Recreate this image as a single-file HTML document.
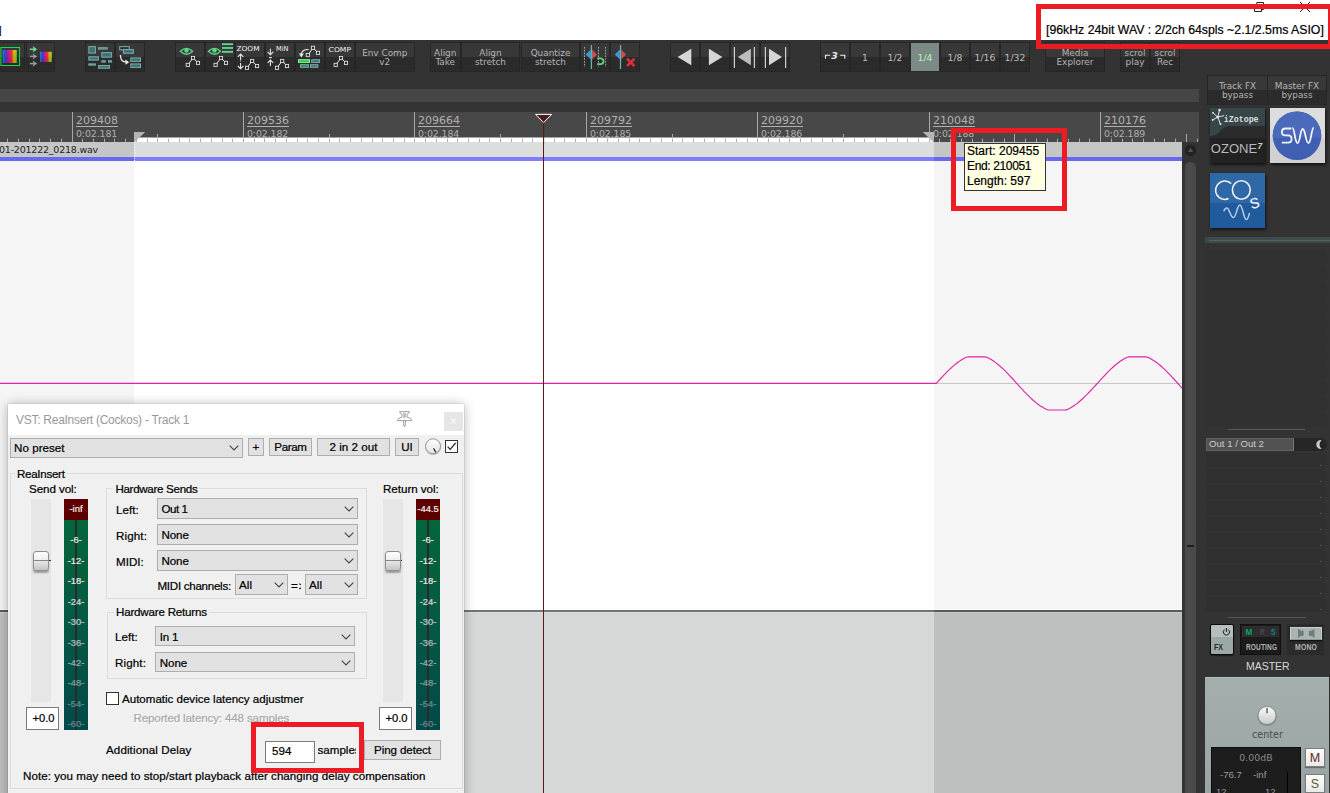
<!DOCTYPE html><html><head><meta charset="utf-8"><title>REAPER ReaInsert</title><style>
*{box-sizing:border-box}
html,body{margin:0;padding:0}
body{width:1330px;height:793px;overflow:hidden;background:#fff;position:relative;font-family:"Liberation Sans",sans-serif;font-size:12px;color:#000}
.a{position:absolute}
.tb{position:absolute;top:42px;height:30px;background:linear-gradient(#383838 0,#383838 50%,#2b2b2b 50%,#2b2b2b 100%);border:1px solid #262626;color:#b4b4b4;font-family:'DejaVu Sans',sans-serif;font-size:8.9px;line-height:9px;text-align:center;overflow:hidden}
.tb span{position:absolute;left:-4px;right:-4px;top:50%;transform:translateY(-50%);margin-top:1.3px}
.tb.g span{margin-top:-.2px}
.tb svg{position:absolute;left:-1px;top:-1px}
.rl{position:absolute;top:115px;font-family:"DejaVu Sans",sans-serif;font-size:11px;color:#b0b0b0;line-height:12px;white-space:nowrap}
.rl u{display:block;text-decoration:none;border-bottom:1px solid #b0b0b0;height:12px;line-height:11px}
.rl i{display:block;font-style:normal;font-size:9.4px;margin-top:1px;letter-spacing:-.1px}
</style></head><body>
<div class="a" style="left:0;top:40px;width:1330px;height:753px;background:#333"></div>
<div class="a" style="left:0;top:89px;width:1199px;height:13px;background:#464646"></div>
<div class="a" style="left:0;top:102px;width:1199px;height:10px;background:#343434"></div>
<div class="a" style="left:0;top:112px;width:1199px;height:30px;background:#484848"></div>
<svg class="a" style="left:0;top:112px" width="1199" height="30" viewBox="0 0 1199 30"><rect x="134" y="25.5" width="800" height="4.5" fill="#fff"/><rect x="7" y="26.6" width="1" height="3.4" fill="#a8a8a8"/><rect x="18" y="26.6" width="1" height="3.4" fill="#a8a8a8"/><rect x="29" y="26.6" width="1" height="3.4" fill="#a8a8a8"/><rect x="39" y="26.6" width="1" height="3.4" fill="#a8a8a8"/><rect x="50" y="26.6" width="1" height="3.4" fill="#a8a8a8"/><rect x="61" y="26.6" width="1" height="3.4" fill="#a8a8a8"/><rect x="72" y="0" width="1" height="30" fill="#a8a8a8"/><rect x="82" y="26.6" width="1" height="3.4" fill="#a8a8a8"/><rect x="93" y="26.6" width="1" height="3.4" fill="#a8a8a8"/><rect x="104" y="26.6" width="1" height="3.4" fill="#a8a8a8"/><rect x="114" y="26.6" width="1" height="3.4" fill="#a8a8a8"/><rect x="125" y="26.6" width="1" height="3.4" fill="#a8a8a8"/><rect x="136" y="26.6" width="1" height="3.4" fill="#a8a8a8"/><rect x="147" y="26.6" width="1" height="3.4" fill="#a8a8a8"/><rect x="157" y="22" width="1" height="8" fill="#a8a8a8"/><rect x="168" y="26.6" width="1" height="3.4" fill="#a8a8a8"/><rect x="179" y="26.6" width="1" height="3.4" fill="#a8a8a8"/><rect x="189" y="26.6" width="1" height="3.4" fill="#a8a8a8"/><rect x="200" y="26.6" width="1" height="3.4" fill="#a8a8a8"/><rect x="211" y="26.6" width="1" height="3.4" fill="#a8a8a8"/><rect x="222" y="26.6" width="1" height="3.4" fill="#a8a8a8"/><rect x="232" y="26.6" width="1" height="3.4" fill="#a8a8a8"/><rect x="243" y="0" width="1" height="30" fill="#a8a8a8"/><rect x="254" y="26.6" width="1" height="3.4" fill="#a8a8a8"/><rect x="264" y="26.6" width="1" height="3.4" fill="#a8a8a8"/><rect x="275" y="26.6" width="1" height="3.4" fill="#a8a8a8"/><rect x="286" y="26.6" width="1" height="3.4" fill="#a8a8a8"/><rect x="297" y="26.6" width="1" height="3.4" fill="#a8a8a8"/><rect x="307" y="26.6" width="1" height="3.4" fill="#a8a8a8"/><rect x="318" y="26.6" width="1" height="3.4" fill="#a8a8a8"/><rect x="329" y="22" width="1" height="8" fill="#a8a8a8"/><rect x="339" y="26.6" width="1" height="3.4" fill="#a8a8a8"/><rect x="350" y="26.6" width="1" height="3.4" fill="#a8a8a8"/><rect x="361" y="26.6" width="1" height="3.4" fill="#a8a8a8"/><rect x="372" y="26.6" width="1" height="3.4" fill="#a8a8a8"/><rect x="382" y="26.6" width="1" height="3.4" fill="#a8a8a8"/><rect x="393" y="26.6" width="1" height="3.4" fill="#a8a8a8"/><rect x="404" y="26.6" width="1" height="3.4" fill="#a8a8a8"/><rect x="414" y="0" width="1" height="30" fill="#a8a8a8"/><rect x="425" y="26.6" width="1" height="3.4" fill="#a8a8a8"/><rect x="436" y="26.6" width="1" height="3.4" fill="#a8a8a8"/><rect x="447" y="26.6" width="1" height="3.4" fill="#a8a8a8"/><rect x="457" y="26.6" width="1" height="3.4" fill="#a8a8a8"/><rect x="468" y="26.6" width="1" height="3.4" fill="#a8a8a8"/><rect x="479" y="26.6" width="1" height="3.4" fill="#a8a8a8"/><rect x="489" y="26.6" width="1" height="3.4" fill="#a8a8a8"/><rect x="500" y="22" width="1" height="8" fill="#a8a8a8"/><rect x="511" y="26.6" width="1" height="3.4" fill="#a8a8a8"/><rect x="522" y="26.6" width="1" height="3.4" fill="#a8a8a8"/><rect x="532" y="26.6" width="1" height="3.4" fill="#a8a8a8"/><rect x="543" y="26.6" width="1" height="3.4" fill="#a8a8a8"/><rect x="554" y="26.6" width="1" height="3.4" fill="#a8a8a8"/><rect x="564" y="26.6" width="1" height="3.4" fill="#a8a8a8"/><rect x="575" y="26.6" width="1" height="3.4" fill="#a8a8a8"/><rect x="586" y="0" width="1" height="30" fill="#a8a8a8"/><rect x="597" y="26.6" width="1" height="3.4" fill="#a8a8a8"/><rect x="607" y="26.6" width="1" height="3.4" fill="#a8a8a8"/><rect x="618" y="26.6" width="1" height="3.4" fill="#a8a8a8"/><rect x="629" y="26.6" width="1" height="3.4" fill="#a8a8a8"/><rect x="639" y="26.6" width="1" height="3.4" fill="#a8a8a8"/><rect x="650" y="26.6" width="1" height="3.4" fill="#a8a8a8"/><rect x="661" y="26.6" width="1" height="3.4" fill="#a8a8a8"/><rect x="672" y="22" width="1" height="8" fill="#a8a8a8"/><rect x="682" y="26.6" width="1" height="3.4" fill="#a8a8a8"/><rect x="693" y="26.6" width="1" height="3.4" fill="#a8a8a8"/><rect x="704" y="26.6" width="1" height="3.4" fill="#a8a8a8"/><rect x="714" y="26.6" width="1" height="3.4" fill="#a8a8a8"/><rect x="725" y="26.6" width="1" height="3.4" fill="#a8a8a8"/><rect x="736" y="26.6" width="1" height="3.4" fill="#a8a8a8"/><rect x="747" y="26.6" width="1" height="3.4" fill="#a8a8a8"/><rect x="757" y="0" width="1" height="30" fill="#a8a8a8"/><rect x="768" y="26.6" width="1" height="3.4" fill="#a8a8a8"/><rect x="779" y="26.6" width="1" height="3.4" fill="#a8a8a8"/><rect x="789" y="26.6" width="1" height="3.4" fill="#a8a8a8"/><rect x="800" y="26.6" width="1" height="3.4" fill="#a8a8a8"/><rect x="811" y="26.6" width="1" height="3.4" fill="#a8a8a8"/><rect x="822" y="26.6" width="1" height="3.4" fill="#a8a8a8"/><rect x="832" y="26.6" width="1" height="3.4" fill="#a8a8a8"/><rect x="843" y="22" width="1" height="8" fill="#a8a8a8"/><rect x="854" y="26.6" width="1" height="3.4" fill="#a8a8a8"/><rect x="864" y="26.6" width="1" height="3.4" fill="#a8a8a8"/><rect x="875" y="26.6" width="1" height="3.4" fill="#a8a8a8"/><rect x="886" y="26.6" width="1" height="3.4" fill="#a8a8a8"/><rect x="897" y="26.6" width="1" height="3.4" fill="#a8a8a8"/><rect x="907" y="26.6" width="1" height="3.4" fill="#a8a8a8"/><rect x="918" y="26.6" width="1" height="3.4" fill="#a8a8a8"/><rect x="929" y="0" width="1" height="30" fill="#a8a8a8"/><rect x="939" y="26.6" width="1" height="3.4" fill="#a8a8a8"/><rect x="950" y="26.6" width="1" height="3.4" fill="#a8a8a8"/><rect x="961" y="26.6" width="1" height="3.4" fill="#a8a8a8"/><rect x="972" y="26.6" width="1" height="3.4" fill="#a8a8a8"/><rect x="982" y="26.6" width="1" height="3.4" fill="#a8a8a8"/><rect x="993" y="26.6" width="1" height="3.4" fill="#a8a8a8"/><rect x="1004" y="26.6" width="1" height="3.4" fill="#a8a8a8"/><rect x="1014" y="22" width="1" height="8" fill="#a8a8a8"/><rect x="1025" y="26.6" width="1" height="3.4" fill="#a8a8a8"/><rect x="1036" y="26.6" width="1" height="3.4" fill="#a8a8a8"/><rect x="1047" y="26.6" width="1" height="3.4" fill="#a8a8a8"/><rect x="1057" y="26.6" width="1" height="3.4" fill="#a8a8a8"/><rect x="1068" y="26.6" width="1" height="3.4" fill="#a8a8a8"/><rect x="1079" y="26.6" width="1" height="3.4" fill="#a8a8a8"/><rect x="1089" y="26.6" width="1" height="3.4" fill="#a8a8a8"/><rect x="1100" y="0" width="1" height="30" fill="#a8a8a8"/><rect x="1111" y="26.6" width="1" height="3.4" fill="#a8a8a8"/><rect x="1122" y="26.6" width="1" height="3.4" fill="#a8a8a8"/><rect x="1132" y="26.6" width="1" height="3.4" fill="#a8a8a8"/><rect x="1143" y="26.6" width="1" height="3.4" fill="#a8a8a8"/><rect x="1154" y="26.6" width="1" height="3.4" fill="#a8a8a8"/><rect x="1164" y="26.6" width="1" height="3.4" fill="#a8a8a8"/><rect x="1175" y="26.6" width="1" height="3.4" fill="#a8a8a8"/><rect x="1186" y="22" width="1" height="8" fill="#a8a8a8"/><rect x="1197" y="26.6" width="1" height="3.4" fill="#a8a8a8"/><polygon points="134,20 145,20 134,30" fill="#b4b4b4"/><polygon points="934,20 923,20 934,30" fill="#b4b4b4"/></svg>
<div class="rl" style="left:76.0px"><u>209408</u><i>0:02.181</i></div>
<div class="rl" style="left:247.0px"><u>209536</u><i>0:02.182</i></div>
<div class="rl" style="left:418.0px"><u>209664</u><i>0:02.184</i></div>
<div class="rl" style="left:590.0px"><u>209792</u><i>0:02.185</i></div>
<div class="rl" style="left:761.0px"><u>209920</u><i>0:02.186</i></div>
<div class="rl" style="left:933.0px"><u>210048</u><i>0:02.188</i></div>
<div class="rl" style="left:1104.0px"><u>210176</u><i>0:02.189</i></div>
<div class="a" style="left:134px;top:137.5px;width:800px;height:4.5px;background:#fff"></div>
<svg class="a" style="left:0;top:112px" width="1199" height="30" viewBox="0 0 1199 30"><rect x="136" y="26.6" width="1" height="3.4" fill="#aeaeae"/><rect x="147" y="26.6" width="1" height="3.4" fill="#aeaeae"/><rect x="157" y="26.6" width="1" height="3.4" fill="#aeaeae"/><rect x="168" y="26.6" width="1" height="3.4" fill="#aeaeae"/><rect x="179" y="26.6" width="1" height="3.4" fill="#aeaeae"/><rect x="189" y="26.6" width="1" height="3.4" fill="#aeaeae"/><rect x="200" y="26.6" width="1" height="3.4" fill="#aeaeae"/><rect x="211" y="26.6" width="1" height="3.4" fill="#aeaeae"/><rect x="222" y="26.6" width="1" height="3.4" fill="#aeaeae"/><rect x="232" y="26.6" width="1" height="3.4" fill="#aeaeae"/><rect x="243" y="26.6" width="1" height="3.4" fill="#aeaeae"/><rect x="254" y="26.6" width="1" height="3.4" fill="#aeaeae"/><rect x="264" y="26.6" width="1" height="3.4" fill="#aeaeae"/><rect x="275" y="26.6" width="1" height="3.4" fill="#aeaeae"/><rect x="286" y="26.6" width="1" height="3.4" fill="#aeaeae"/><rect x="297" y="26.6" width="1" height="3.4" fill="#aeaeae"/><rect x="307" y="26.6" width="1" height="3.4" fill="#aeaeae"/><rect x="318" y="26.6" width="1" height="3.4" fill="#aeaeae"/><rect x="329" y="26.6" width="1" height="3.4" fill="#aeaeae"/><rect x="339" y="26.6" width="1" height="3.4" fill="#aeaeae"/><rect x="350" y="26.6" width="1" height="3.4" fill="#aeaeae"/><rect x="361" y="26.6" width="1" height="3.4" fill="#aeaeae"/><rect x="372" y="26.6" width="1" height="3.4" fill="#aeaeae"/><rect x="382" y="26.6" width="1" height="3.4" fill="#aeaeae"/><rect x="393" y="26.6" width="1" height="3.4" fill="#aeaeae"/><rect x="404" y="26.6" width="1" height="3.4" fill="#aeaeae"/><rect x="414" y="26.6" width="1" height="3.4" fill="#aeaeae"/><rect x="425" y="26.6" width="1" height="3.4" fill="#aeaeae"/><rect x="436" y="26.6" width="1" height="3.4" fill="#aeaeae"/><rect x="447" y="26.6" width="1" height="3.4" fill="#aeaeae"/><rect x="457" y="26.6" width="1" height="3.4" fill="#aeaeae"/><rect x="468" y="26.6" width="1" height="3.4" fill="#aeaeae"/><rect x="479" y="26.6" width="1" height="3.4" fill="#aeaeae"/><rect x="489" y="26.6" width="1" height="3.4" fill="#aeaeae"/><rect x="500" y="26.6" width="1" height="3.4" fill="#aeaeae"/><rect x="511" y="26.6" width="1" height="3.4" fill="#aeaeae"/><rect x="522" y="26.6" width="1" height="3.4" fill="#aeaeae"/><rect x="532" y="26.6" width="1" height="3.4" fill="#aeaeae"/><rect x="543" y="26.6" width="1" height="3.4" fill="#aeaeae"/><rect x="554" y="26.6" width="1" height="3.4" fill="#aeaeae"/><rect x="564" y="26.6" width="1" height="3.4" fill="#aeaeae"/><rect x="575" y="26.6" width="1" height="3.4" fill="#aeaeae"/><rect x="586" y="26.6" width="1" height="3.4" fill="#aeaeae"/><rect x="597" y="26.6" width="1" height="3.4" fill="#aeaeae"/><rect x="607" y="26.6" width="1" height="3.4" fill="#aeaeae"/><rect x="618" y="26.6" width="1" height="3.4" fill="#aeaeae"/><rect x="629" y="26.6" width="1" height="3.4" fill="#aeaeae"/><rect x="639" y="26.6" width="1" height="3.4" fill="#aeaeae"/><rect x="650" y="26.6" width="1" height="3.4" fill="#aeaeae"/><rect x="661" y="26.6" width="1" height="3.4" fill="#aeaeae"/><rect x="672" y="26.6" width="1" height="3.4" fill="#aeaeae"/><rect x="682" y="26.6" width="1" height="3.4" fill="#aeaeae"/><rect x="693" y="26.6" width="1" height="3.4" fill="#aeaeae"/><rect x="704" y="26.6" width="1" height="3.4" fill="#aeaeae"/><rect x="714" y="26.6" width="1" height="3.4" fill="#aeaeae"/><rect x="725" y="26.6" width="1" height="3.4" fill="#aeaeae"/><rect x="736" y="26.6" width="1" height="3.4" fill="#aeaeae"/><rect x="747" y="26.6" width="1" height="3.4" fill="#aeaeae"/><rect x="757" y="26.6" width="1" height="3.4" fill="#aeaeae"/><rect x="768" y="26.6" width="1" height="3.4" fill="#aeaeae"/><rect x="779" y="26.6" width="1" height="3.4" fill="#aeaeae"/><rect x="789" y="26.6" width="1" height="3.4" fill="#aeaeae"/><rect x="800" y="26.6" width="1" height="3.4" fill="#aeaeae"/><rect x="811" y="26.6" width="1" height="3.4" fill="#aeaeae"/><rect x="822" y="26.6" width="1" height="3.4" fill="#aeaeae"/><rect x="832" y="26.6" width="1" height="3.4" fill="#aeaeae"/><rect x="843" y="26.6" width="1" height="3.4" fill="#aeaeae"/><rect x="854" y="26.6" width="1" height="3.4" fill="#aeaeae"/><rect x="864" y="26.6" width="1" height="3.4" fill="#aeaeae"/><rect x="875" y="26.6" width="1" height="3.4" fill="#aeaeae"/><rect x="886" y="26.6" width="1" height="3.4" fill="#aeaeae"/><rect x="897" y="26.6" width="1" height="3.4" fill="#aeaeae"/><rect x="907" y="26.6" width="1" height="3.4" fill="#aeaeae"/><rect x="918" y="26.6" width="1" height="3.4" fill="#aeaeae"/><rect x="929" y="26.6" width="1" height="3.4" fill="#aeaeae"/><polygon points="134,20 145,20 134,31" fill="#b4b4b4"/><polygon points="934,20 923,20 934,31" fill="#b4b4b4"/></svg>
<div class="a" style="left:0;top:142px;width:1182px;height:651px;background:#f5f5f5;overflow:hidden">
<div class="a" style="left:0;top:0;width:1182px;height:15px;background:#c5c7c6"></div>
<div class="a" style="left:0;top:15px;width:1182px;height:4px;background:#6868f2"></div>
<div class="a" style="left:0;top:468px;width:1182px;height:183px;background:#bec0bf"></div>
<div class="a" style="left:134px;top:0;width:800px;height:15px;background:#dcdedd"></div>
<div class="a" style="left:134px;top:15px;width:800px;height:4px;background:#7e7eff"></div>
<div class="a" style="left:134px;top:19px;width:800px;height:449px;background:#fff"></div>
<div class="a" style="left:134px;top:468px;width:800px;height:183px;background:#d6d8d7"></div>
<div class="a" style="left:0;top:467px;width:1182px;height:1px;background:#fff"></div>
<div class="a" style="left:0;top:468px;width:1182px;height:2px;background:#595b5a"></div>
<div class="a" style="left:134px;top:468px;width:800px;height:2px;background:#737574"></div>
<div class="a" style="left:0;top:470px;width:1182px;height:1px;background:#c8cac9"></div>
<div class="a" style="left:134px;top:470px;width:800px;height:1px;background:#dddfde"></div>
<div class="a" style="left:133.5px;top:0;width:0;height:19px;border-left:1px dotted #fff"></div>
<div class="a" style="left:-1px;top:1px;font-family:'DejaVu Sans',sans-serif;font-size:9.5px;letter-spacing:-.22px;line-height:13px;color:#222;white-space:nowrap">01-201222_0218.wav</div>
<svg class="a" style="left:0;top:0" width="1182" height="651" viewBox="0 0 1182 651" fill="none"><path d="M936 241.4 H1182" stroke="#c2c4c3" stroke-width="1"/><path d="M0 241.4 L936.3 241.4 L936.3 241.4 L938.3 239.2 L940.3 237.0 L942.3 234.8 L944.3 232.7 L946.3 230.6 L948.3 228.6 L950.3 226.7 L952.3 224.9 L954.3 223.1 L956.3 221.5 L958.3 220.0 L960.3 218.6 L962.3 217.4 L964.3 216.3 L966.3 215.3 L968.3 214.8 L970.3 214.8 L972.3 214.8 L974.3 214.8 L976.3 214.8 L978.3 214.8 L980.3 214.8 L982.3 214.8 L984.3 214.8 L986.3 215.1 L988.3 216.0 L990.3 217.1 L992.3 218.3 L994.3 219.6 L996.3 221.1 L998.3 222.7 L1000.3 224.4 L1002.3 226.2 L1004.3 228.1 L1006.3 230.1 L1008.3 232.2 L1010.3 234.3 L1012.3 236.5 L1014.3 238.6 L1016.3 240.8 L1018.3 243.1 L1020.3 245.3 L1022.3 247.4 L1024.3 249.6 L1026.3 251.7 L1028.3 253.7 L1030.3 255.6 L1032.3 257.5 L1034.3 259.3 L1036.3 260.9 L1038.3 262.5 L1040.3 263.9 L1042.3 265.1 L1044.3 266.3 L1046.3 267.2 L1048.3 268.0 L1050.3 268.0 L1052.3 268.0 L1054.3 268.0 L1056.3 268.0 L1058.3 268.0 L1060.3 268.0 L1062.3 268.0 L1064.3 268.0 L1066.3 267.9 L1068.3 267.0 L1070.3 266.0 L1072.3 264.8 L1074.3 263.5 L1076.3 262.1 L1078.3 260.5 L1080.3 258.8 L1082.3 257.0 L1084.3 255.1 L1086.3 253.2 L1088.3 251.1 L1090.3 249.0 L1092.3 246.9 L1094.3 244.7 L1096.3 242.5 L1098.3 240.3 L1100.3 238.1 L1102.3 235.9 L1104.3 233.8 L1106.3 231.7 L1108.3 229.6 L1110.3 227.7 L1112.3 225.8 L1114.3 224.0 L1116.3 222.3 L1118.3 220.7 L1120.3 219.3 L1122.3 218.0 L1124.3 216.8 L1126.3 215.8 L1128.3 214.9 L1130.3 214.8 L1132.3 214.8 L1134.3 214.8 L1136.3 214.8 L1138.3 214.8 L1140.3 214.8 L1142.3 214.8 L1144.3 214.8 L1146.3 214.8 L1148.3 215.6 L1150.3 216.5 L1152.3 217.7 L1154.3 218.9 L1156.3 220.3 L1158.3 221.9 L1160.3 223.5 L1162.3 225.3 L1164.3 227.2 L1166.3 229.1 L1168.3 231.1 L1170.3 233.2 L1172.3 235.4 L1174.3 237.5 L1176.3 239.7 L1178.3 242.0 L1180.3 244.2 L1182.3 246.3" stroke="#e022a6" stroke-width="1.15" stroke-linejoin="round"/></svg>
<div class="a" style="left:543px;top:-5px;width:1.1px;height:660px;background:#5a1a1a"></div>
</div>
<svg class="a" style="left:534px;top:112px" width="20" height="32" viewBox="0 0 20 32"><polygon points="1.6,2.4 17.6,2.4 9.6,10.6" fill="#4a1c1c" stroke="#fff" stroke-width="1"/><rect x="9" y="10.8" width="1.1" height="22" fill="#5a1a1a"/></svg>
<div class="a" style="left:1182px;top:142px;width:17px;height:651px;background:#333"></div>
<div class="a" style="left:1185px;top:162px;width:11px;height:640px;background:#4a4a4a;border-radius:5px"></div>
<div class="a" style="left:1187px;top:545px;width:7px;height:2px;background:#1e1e1e"></div>
<svg class="a" style="left:1184px;top:144px" width="13" height="13" viewBox="0 0 13 13"><circle cx="6.5" cy="6.5" r="5.7" fill="#222"/><polygon points="6.5,3.8 9.3,8 3.7,8" fill="#505050"/></svg>
<svg class="a" width="0" height="0"><defs><linearGradient id="rb" x1="0" x2="1" y1="0" y2="0"><stop offset="0" stop-color="#1a9ee8"/><stop offset=".12" stop-color="#2458dc"/><stop offset=".3" stop-color="#8a22c8"/><stop offset=".46" stop-color="#e01e8c"/><stop offset=".6" stop-color="#e6302c"/><stop offset=".74" stop-color="#ec9a20"/><stop offset=".86" stop-color="#d4cc20"/><stop offset="1" stop-color="#44b82c"/></linearGradient><linearGradient id="rbs" x1="0" x2="0" y1="0" y2="1"><stop offset="0" stop-color="#000" stop-opacity=".0"/><stop offset="1" stop-color="#000" stop-opacity=".18"/></linearGradient></defs></svg>
<div class="tb" style="left:-6px;width:30.5px;"><svg width="30" height="30" viewBox="0 0 30 30" fill="none"><rect x="6.9" y="5.5" width="18.7" height="18" stroke="#14e04a" stroke-width="1"/><rect x="8.8" y="8" width="14.2" height="13" fill="url(#rb)"/><rect x="8.8" y="8" width="14.2" height="13" fill="url(#rbs)"/></svg></div>
<div class="tb" style="left:25.5px;width:29.5px;"><svg width="30" height="30" viewBox="0 0 30 30" fill="none"><path d="M3.8 7.3 H8" stroke="#6fdc93" stroke-width="1.5"/><polygon points="6.6,4.1 11.2,7.3 6.6,10.5 7.8,7.3" fill="#6fdc93"/><path d="M3.8 14.4 H8" stroke="#9a9a9a" stroke-width="1.5"/><polygon points="6.6,11.2 11.2,14.4 6.6,17.6 7.8,14.4" fill="#9a9a9a"/><path d="M3.8 21.6 H8" stroke="#9a9a9a" stroke-width="1.5"/><polygon points="6.6,18.400000000000002 11.2,21.6 6.6,24.8 7.8,21.6" fill="#9a9a9a"/><rect x="14" y="9.8" width="12" height="10.2" fill="url(#rb)"/><rect x="14" y="9.8" width="12" height="10.2" fill="url(#rbs)"/></svg></div>
<div class="tb" style="left:85px;width:30px;"><svg width="30" height="30" viewBox="0 0 30 30" fill="none"><rect x="3.8" y="4.6" width="6.6" height="6.5" fill="#3f7372" stroke="#79adab" stroke-width="1"/><rect x="13.5" y="5.7" width="8.7" height="1.4" fill="#3f7372" stroke="#79adab" stroke-width="1"/><rect x="16.8" y="10.6" width="9.6" height="4.6" fill="#3f7372" stroke="#79adab" stroke-width="1"/><rect x="3.8" y="14.8" width="9.6" height="3.3" fill="#3f7372" stroke="#79adab" stroke-width="1"/><rect x="16.8" y="18.7" width="3.5" height="1.4" fill="#3f7372" stroke="#79adab" stroke-width="1"/><rect x="23.5" y="18.7" width="2.9" height="1.4" fill="#3f7372" stroke="#79adab" stroke-width="1"/><rect x="3.8" y="21.9" width="6.6" height="1.2" fill="#3f7372" stroke="#79adab" stroke-width="1"/><rect x="13.6" y="23.5" width="10.9" height="2.7" fill="#3f7372" stroke="#79adab" stroke-width="1"/></svg></div>
<div class="tb" style="left:115px;width:30px;"><svg width="30" height="30" viewBox="0 0 30 30" fill="none"><rect x="4.7" y="4.6" width="9.5" height="3.3" fill="#2e2e2e" stroke="#79adab" stroke-width="1"/><rect x="8.4" y="7.5" width="10.0" height="3.8" fill="#3f7372" stroke="#79adab" stroke-width="1"/><rect x="15.8" y="15.9" width="9.7" height="3.5" fill="#3f7372" stroke="#79adab" stroke-width="1"/><rect x="15.8" y="21.9" width="9.7" height="3.5" fill="#3f7372" stroke="#79adab" stroke-width="1"/><path d="M5.4 13 Q5.4 20 11.5 20.2" stroke="#e8e8e8" stroke-width="1.3"/><polygon points="10.5,17.6 14.2,20.3 10.5,22.8" fill="#e8e8e8"/></svg></div>
<div class="tb" style="left:175px;width:30px;"><svg width="30" height="30" viewBox="0 0 30 30" fill="none"><path d="M5.4 9.3 Q11.5 3.5 17.6 9.3 Q11.5 15.1 5.4 9.3Z" stroke="#5fd486" stroke-width="1.3"/><circle cx="11.5" cy="8.6" r="2.2" fill="#5fd486"/><path d="M12.8 22.9 L18.0 16.0 L23.0 20.9" stroke="#e6e6e6" stroke-width="1"/><rect x="11.2" y="21.3" width="3.2" height="3.2" fill="#2e2e2e" stroke="#e6e6e6" stroke-width=".85"/><rect x="16.4" y="14.4" width="3.2" height="3.2" fill="#2e2e2e" stroke="#e6e6e6" stroke-width=".85"/><rect x="21.4" y="19.3" width="3.2" height="3.2" fill="#2e2e2e" stroke="#e6e6e6" stroke-width=".85"/></svg></div>
<div class="tb" style="left:205px;width:30px;"><svg width="30" height="30" viewBox="0 0 30 30" fill="none"><path d="M3.4 9.3 Q9.5 3.5 15.6 9.3 Q9.5 15.1 3.4 9.3Z" stroke="#5fd486" stroke-width="1.3"/><circle cx="9.5" cy="8.6" r="2.2" fill="#5fd486"/><rect x="17" y="1.2" width="11" height="1.9" fill="#5fd486"/><rect x="17" y="5.0" width="11" height="1.9" fill="#5fd486"/><rect x="17" y="8.9" width="11" height="1.9" fill="#5fd486"/><path d="M10.6 22.9 L16.0 16.0 L21.0 20.9" stroke="#e6e6e6" stroke-width="1"/><rect x="9.0" y="21.3" width="3.2" height="3.2" fill="#2e2e2e" stroke="#e6e6e6" stroke-width=".85"/><rect x="14.4" y="14.4" width="3.2" height="3.2" fill="#2e2e2e" stroke="#e6e6e6" stroke-width=".85"/><rect x="19.4" y="19.3" width="3.2" height="3.2" fill="#2e2e2e" stroke="#e6e6e6" stroke-width=".85"/></svg></div>
<div class="tb" style="left:235px;width:30px;"><svg width="30" height="30" viewBox="0 0 30 30" fill="none"><text x="1.5" y="8.8" font-family="DejaVu Sans,sans-serif" font-size="6.8" fill="#f2f2f2" textLength="23" lengthAdjust="spacingAndGlyphs">ZOOM</text><path d="M5.6 18.0 V12.1 M2.8 14.9 L5.6 12.1 L8.4 14.9" stroke="#e6e6e6" stroke-width="1.1"/><path d="M5.6 20.9 V26.8 M2.8 24.0 L5.6 26.8 L8.4 24.0" stroke="#e6e6e6" stroke-width="1.1"/><path d="M5.6 18.6 V20.6" stroke="#e6e6e6" stroke-width="1" stroke-dasharray="1 1"/><path d="M12.0 25.8 L17.1 19.0 L22.0 24.0" stroke="#e6e6e6" stroke-width="1"/><rect x="10.4" y="24.2" width="3.2" height="3.2" fill="#2e2e2e" stroke="#e6e6e6" stroke-width=".85"/><rect x="15.5" y="17.4" width="3.2" height="3.2" fill="#2e2e2e" stroke="#e6e6e6" stroke-width=".85"/><rect x="20.4" y="22.4" width="3.2" height="3.2" fill="#2e2e2e" stroke="#e6e6e6" stroke-width=".85"/></svg></div>
<div class="tb" style="left:265px;width:30px;"><svg width="30" height="30" viewBox="0 0 30 30" fill="none"><text x="11" y="8.8" font-family="DejaVu Sans,sans-serif" font-size="6.8" fill="#f2f2f2" textLength="12.5" lengthAdjust="spacingAndGlyphs">MiN</text><path d="M5.4 6.7 V12.6 M2.6 9.8 L5.4 12.6 L8.2 9.8" stroke="#e6e6e6" stroke-width="1.1"/><path d="M4 15.6 H6.8" stroke="#e6e6e6" stroke-width="1.1"/><path d="M5.4 23.9 V18.0 M2.6 20.8 L5.4 18.0 L8.2 20.8" stroke="#e6e6e6" stroke-width="1.1"/><path d="M12.0 25.8 L17.2 19.0 L22.0 24.0" stroke="#e6e6e6" stroke-width="1"/><rect x="10.4" y="24.2" width="3.2" height="3.2" fill="#2e2e2e" stroke="#e6e6e6" stroke-width=".85"/><rect x="15.6" y="17.4" width="3.2" height="3.2" fill="#2e2e2e" stroke="#e6e6e6" stroke-width=".85"/><rect x="20.4" y="22.4" width="3.2" height="3.2" fill="#2e2e2e" stroke="#e6e6e6" stroke-width=".85"/></svg></div>
<div class="tb" style="left:295px;width:30px;"><svg width="30" height="30" viewBox="0 0 30 30" fill="none"><path d="M12.9 13.1 L18.0 5.8 L23.0 10.9" stroke="#e6e6e6" stroke-width="1"/><rect x="11.3" y="11.5" width="3.2" height="3.2" fill="#2e2e2e" stroke="#e6e6e6" stroke-width=".85"/><rect x="16.4" y="4.2" width="3.2" height="3.2" fill="#2e2e2e" stroke="#e6e6e6" stroke-width=".85"/><rect x="21.4" y="9.3" width="3.2" height="3.2" fill="#2e2e2e" stroke="#e6e6e6" stroke-width=".85"/><path d="M13.6 7.5 Q6.4 7.2 6.3 13" stroke="#e8e8e8" stroke-width="1.2"/><polygon points="3.8,11.6 8.8,11.6 6.3,15.4" fill="#e8e8e8"/><rect x="3.5" y="17.7" width="11.0" height="2.7" fill="#1fd244" stroke="#8ff0a0" stroke-width="1"/><rect x="16.7" y="17.7" width="7.8" height="2.7" fill="#3f7372" stroke="#79adab" stroke-width="1"/><rect x="5.5" y="22.7" width="7.9" height="2.6" fill="#3f7372" stroke="#79adab" stroke-width="1"/><rect x="15.5" y="22.7" width="7.3" height="2.6" fill="#3f7372" stroke="#79adab" stroke-width="1"/></svg></div>
<div class="tb" style="left:325px;width:30px;"><svg width="30" height="30" viewBox="0 0 30 30" fill="none"><text x="3.6" y="9.6" font-family="DejaVu Sans,sans-serif" font-size="6.8" fill="#f2f2f2" textLength="22.4" lengthAdjust="spacingAndGlyphs">COMP</text><path d="M10.7 22.9 L16.0 16.0 L21.0 20.9" stroke="#e6e6e6" stroke-width="1"/><rect x="9.1" y="21.3" width="3.2" height="3.2" fill="#2e2e2e" stroke="#e6e6e6" stroke-width=".85"/><rect x="14.4" y="14.4" width="3.2" height="3.2" fill="#2e2e2e" stroke="#e6e6e6" stroke-width=".85"/><rect x="19.4" y="19.3" width="3.2" height="3.2" fill="#2e2e2e" stroke="#e6e6e6" stroke-width=".85"/></svg></div>
<div class="tb" style="left:355px;width:59.5px;"><span>Env Comp<br>v2</span></div>
<div class="tb" style="left:430px;width:30.5px;"><span>Align<br>Take</span></div>
<div class="tb" style="left:461px;width:59px;"><span>Align<br>stretch</span></div>
<div class="tb" style="left:521px;width:59px;"><span>Quantize<br>stretch</span></div>
<div class="tb" style="left:580px;width:30px;"><svg width="30" height="30" viewBox="0 0 30 30" fill="none"><path d="M4.5 5 V25" stroke="#a8a8a8" stroke-width="1" stroke-dasharray="1.6 1.2"/><path d="M18.5 5 V25" stroke="#a8a8a8" stroke-width="1" stroke-dasharray="1.6 1.2"/><path d="M25.6 5 V25" stroke="#a8a8a8" stroke-width="1" stroke-dasharray="1.6 1.2"/><path d="M11.4 3 V27" stroke="#6fb0ae" stroke-width="1.3"/><polygon points="5.8,12.6 10.8,7.6 10.8,17.6" fill="#3b9ddb"/><polygon points="17.0,12.6 12.0,7.6 12.0,17.6" fill="#c4504f"/><path d="M17.2 16.3 H20.6 A2.9 2.9 0 0 1 20.6 22.1 H17.2" stroke="#5fd478" stroke-width="1.8"/></svg></div>
<div class="tb" style="left:610px;width:30px;"><svg width="30" height="30" viewBox="0 0 30 30" fill="none"><path d="M10.5 3 V27" stroke="#6fb0ae" stroke-width="1.3"/><polygon points="4.9,12.6 9.9,7.6 9.9,17.6" fill="#3b9ddb"/><polygon points="16.1,12.6 11.1,7.6 11.1,17.6" fill="#c4504f"/><path d="M17 16.6 L24.4 24 M24.4 16.6 L17 24" stroke="#dc3038" stroke-width="2.6"/></svg></div>
<div class="tb" style="left:670px;width:30px;"><svg width="30" height="30" viewBox="0 0 30 30" fill="none"><polygon points="7.6,15 21.3,6.8 21.3,23.2" fill="#d6d6d6"/></svg></div>
<div class="tb" style="left:700px;width:30px;"><svg width="30" height="30" viewBox="0 0 30 30" fill="none"><polygon points="22.4,15 8.9,6.8 8.9,23.2" fill="#d6d6d6"/></svg></div>
<div class="tb" style="left:730px;width:30px;"><svg width="30" height="30" viewBox="0 0 30 30" fill="none"><path d="M4.4 5 V26 M24.4 5 V26" stroke="#cfcfcf" stroke-width="1.2"/><polygon points="7.8,15 20.9,6.8 20.9,23.2" fill="#bcbcbc"/></svg></div>
<div class="tb" style="left:760px;width:30px;"><svg width="30" height="30" viewBox="0 0 30 30" fill="none"><path d="M5.4 5 V26 M25.6 5 V26" stroke="#cfcfcf" stroke-width="1.2"/><polygon points="22,15 9,6.8 9,23.2" fill="#d6d6d6"/></svg></div>
<div class="tb" style="left:820px;width:30px;"><svg width="30" height="30" viewBox="0 0 30 30" fill="none"><path d="M5.5 16.8 V13.2 H10.2 M20.2 13.2 H24.8 V16.8" stroke="#eee" stroke-width="1.1"/><text x="11.2" y="17.4" font-family="DejaVu Sans,sans-serif" font-size="9.4" font-weight="bold" font-style="italic" fill="#eee">3</text></svg></div>
<div class="tb g" style="left:850px;width:30px;font-family:'DejaVu Sans',sans-serif;font-size:9.3px;color:#bdbdbd"><span>1</span></div>
<div class="tb g" style="left:880px;width:30px;font-family:'DejaVu Sans',sans-serif;font-size:9.3px;color:#bdbdbd"><span>1/2</span></div>
<div class="tb g" style="left:910px;width:30px;font-family:'DejaVu Sans',sans-serif;font-size:9.3px;color:#bdbdbd;background:#7b8a87;color:#b6f2b8;border-color:#2a2a2a"><span>1/4</span></div>
<div class="tb g" style="left:940px;width:30px;font-family:'DejaVu Sans',sans-serif;font-size:9.3px;color:#bdbdbd"><span>1/8</span></div>
<div class="tb g" style="left:970px;width:30px;font-family:'DejaVu Sans',sans-serif;font-size:9.3px;color:#bdbdbd"><span>1/16</span></div>
<div class="tb g" style="left:1000px;width:30px;font-family:'DejaVu Sans',sans-serif;font-size:9.3px;color:#bdbdbd"><span>1/32</span></div>
<div class="tb" style="left:1045px;width:60px;"><span>Media<br>Explorer</span></div>
<div class="tb" style="left:1120px;width:30px;"><span>scrol<br>play</span></div>
<div class="tb" style="left:1150px;width:30px;"><span>scrol<br>Rec</span></div>
<div class="tb" style="left:1207px;width:61px;top:75px"><span>Track FX<br>bypass</span></div>
<div class="tb" style="left:1267px;width:60px;top:75px"><span>Master FX<br>bypass</span></div>
<div class="a" style="left:1210px;top:108px;width:55px;height:55px;background:linear-gradient(#2b2b2d 0,#2b2b2d 54%,#222223 54%);box-shadow:1px 2px 3px rgba(0,0,0,.65);overflow:hidden"><svg class="a" style="left:0;top:0" width="55" height="55" viewBox="0 0 55 55"><path d="M0 0 H55 V18 H19 Q14 18.4 9 24 Q5.4 28 0 28 Z" fill="#374749"/><g stroke="#e4e4e4" stroke-width="1" stroke-linecap="round"><path d="M7.7 9.1 L3 4.9 M7.7 9.1 L2.7 11.9 M7.7 9.1 L9.6 2 M7.7 9.1 L13.8 7.7 M7.7 9.1 L10.5 16.1"/></g><g fill="#e4e4e4"><circle cx="7.7" cy="9.1" r="1.4"/><circle cx="3" cy="4.9" r=".9"/><circle cx="2.7" cy="11.9" r=".9"/><circle cx="9.6" cy="2" r="1.3"/><circle cx="10.5" cy="16.1" r="1"/></g><text x="13.8" y="13.9" font-family="Liberation Mono,monospace" font-weight="bold" font-size="8.2" fill="#dedede" textLength="34.8" lengthAdjust="spacingAndGlyphs">iZotope</text><text x="0.8" y="44.7" font-family="Liberation Sans,sans-serif" font-size="13" fill="#b9b9b9" textLength="46.4" lengthAdjust="spacingAndGlyphs">OZONE</text><text x="47.6" y="41.3" font-family="Liberation Sans,sans-serif" font-weight="bold" font-style="italic" font-size="8.4" fill="#d6d6d6">7</text></svg></div>
<div class="a" style="left:1270px;top:108px;width:55px;height:55px;background:linear-gradient(#dddddd 0,#dddddd 54%,#d1d1d1 54%);box-shadow:1px 2px 3px rgba(0,0,0,.65)"><svg class="a" style="left:0;top:0" width="55" height="55" viewBox="0 0 55 55" fill="none"><defs><clipPath id="ct"><rect x="0" y="0" width="55" height="29.7"/></clipPath><clipPath id="cb"><rect x="0" y="27.5" width="55" height="28"/></clipPath></defs><circle cx="27" cy="27.7" r="24.3" fill="#3f5fb2"/><circle cx="27" cy="27.7" r="24.3" fill="#4c6abb" clip-path="url(#ct)"/><path d="M21.4 20.5 H15.4 Q11.9 20.5 11.9 23.9 Q11.9 27.4 15.4 27.4 H18 Q21.6 27.4 21.6 31 Q21.6 34.7 18 34.7 H11.8" stroke="#f1f3f9" stroke-width="1.8"/><path d="M22.4 19.8 C24.8 19.8 24.6 35 27.6 35 C30.4 35 30 21 32.7 21 C35.6 21 35.4 35 38.4 35 C41.4 35 41.2 19.8 43.8 19.6" stroke="#f1f3f9" stroke-width="1.8"/></svg></div>
<div class="a" style="left:1210px;top:173px;width:55px;height:55px;background:linear-gradient(#2f68a6 0,#2f68a6 54%,#205c9d 54%);box-shadow:1px 2px 3px rgba(0,0,0,.65)"><svg class="a" style="left:0;top:0" width="55" height="55" viewBox="0 0 55 55" fill="none"><path d="M21.2 10.6 A9.2 9.2 0 1 0 18.6 25.6" stroke="#eef0f0" stroke-width="1.6"/><ellipse cx="31.3" cy="17" rx="8.9" ry="9.3" stroke="#eef0f0" stroke-width="1.6"/><text x="39.6" y="35.2" font-family="Liberation Sans,sans-serif" font-size="19" fill="#eef0f0" transform="rotate(-16 44 29)">s</text><path d="M13.7 38.3 C14.7 36 15.7 35 16.7 35 C19.5 35 20.5 44.6 23.3 44.6 C26.3 44.6 27 31.9 29.8 31.9 C32.8 31.9 33.4 46.5 36.4 46.5 C38 46.5 38.8 43 39.5 39.9" stroke="#b4cce8" stroke-width="1.5"/></svg></div>
<div class="a" style="left:1205px;top:237px;width:125px;height:6px;background:#3d4b4a"></div>
<div class="a" style="left:1209px;top:239.5px;width:121px;height:1px;background:#55625f"></div>
<div class="a" style="left:1206px;top:250px;width:121px;height:15.2px;background:#313131"></div><div class="a" style="left:1206px;top:266.2px;width:121px;height:15.2px;background:#313131"></div><div class="a" style="left:1206px;top:282.4px;width:121px;height:15.2px;background:#313131"></div><div class="a" style="left:1206px;top:298.59999999999997px;width:121px;height:15.2px;background:#313131"></div><div class="a" style="left:1206px;top:314.79999999999995px;width:121px;height:15.2px;background:#313131"></div><div class="a" style="left:1206px;top:330.99999999999994px;width:121px;height:15.2px;background:#313131"></div><div class="a" style="left:1206px;top:347.19999999999993px;width:121px;height:15.2px;background:#313131"></div><div class="a" style="left:1206px;top:363.3999999999999px;width:121px;height:15.2px;background:#313131"></div><div class="a" style="left:1206px;top:379.5999999999999px;width:121px;height:15.2px;background:#313131"></div><div class="a" style="left:1206px;top:395.7999999999999px;width:121px;height:15.2px;background:#313131"></div><div class="a" style="left:1206px;top:411.9999999999999px;width:121px;height:15.2px;background:#313131"></div>
<div class="a" style="left:1228px;top:429px;width:77px;height:1px;background:#585858"></div>
<div class="a" style="left:1206px;top:438px;width:121px;height:13px;background:#262626;border-radius:0 7px 7px 0"></div>
<div class="a" style="left:1206px;top:438px;width:88px;height:13px;background:#525252;border:1px solid #606060;border-right-color:#777;color:#cdcdcd;font-size:9.6px;line-height:10px;padding-left:2px;white-space:nowrap">Out 1 / Out 2</div>
<svg class="a" style="left:1314px;top:439px" width="10" height="11" viewBox="0 0 10 11"><path d="M7.6 1.2 A4.4 4.4 0 1 0 7.6 9.8 A5.4 5.4 0 0 1 7.6 1.2Z" fill="#c8c8c8"/></svg>
<div class="a" style="left:1206px;top:453.4px;width:121px;height:15px;background:#303030;border-radius:0 7px 7px 0"></div><div class="a" style="left:1320px;top:465.4px;width:2px;height:1px;background:#505050"></div><div class="a" style="left:1206px;top:469.3px;width:121px;height:15px;background:#303030;border-radius:0 7px 7px 0"></div><div class="a" style="left:1320px;top:481.3px;width:2px;height:1px;background:#505050"></div><div class="a" style="left:1206px;top:485.2px;width:121px;height:15px;background:#303030;border-radius:0 7px 7px 0"></div><div class="a" style="left:1320px;top:497.2px;width:2px;height:1px;background:#505050"></div><div class="a" style="left:1206px;top:501.1px;width:121px;height:15px;background:#303030;border-radius:0 7px 7px 0"></div><div class="a" style="left:1320px;top:513.1px;width:2px;height:1px;background:#505050"></div><div class="a" style="left:1206px;top:517.0px;width:121px;height:15px;background:#303030;border-radius:0 7px 7px 0"></div><div class="a" style="left:1320px;top:529.0px;width:2px;height:1px;background:#505050"></div><div class="a" style="left:1206px;top:532.9px;width:121px;height:15px;background:#303030;border-radius:0 7px 7px 0"></div><div class="a" style="left:1320px;top:544.9px;width:2px;height:1px;background:#505050"></div><div class="a" style="left:1206px;top:548.8px;width:121px;height:15px;background:#303030;border-radius:0 7px 7px 0"></div><div class="a" style="left:1320px;top:560.8px;width:2px;height:1px;background:#505050"></div><div class="a" style="left:1206px;top:564.7px;width:121px;height:15px;background:#303030;border-radius:0 7px 7px 0"></div><div class="a" style="left:1320px;top:576.7px;width:2px;height:1px;background:#505050"></div><div class="a" style="left:1206px;top:580.6px;width:121px;height:15px;background:#303030;border-radius:0 7px 7px 0"></div><div class="a" style="left:1320px;top:592.6px;width:2px;height:1px;background:#505050"></div><div class="a" style="left:1206px;top:596.5px;width:121px;height:15px;background:#303030;border-radius:0 7px 7px 0"></div><div class="a" style="left:1320px;top:608.5px;width:2px;height:1px;background:#505050"></div>
<div class="a" style="left:1228px;top:617px;width:78px;height:1px;background:#585858"></div>
<div class="a" style="left:1210px;top:624px;width:24px;height:30.6px;background:linear-gradient(#b3bebd 0,#b3bebd 42%,#9ca8a7 42%);border:1px solid #0c0c0c;border-radius:2px;box-shadow:0 1px 1px rgba(0,0,0,.5)"><svg class="a" style="left:0;top:0" width="22" height="28" viewBox="0 0 22 28" fill="none"><path d="M13.4 4.6 A3.1 3.1 0 1 0 17.4 4.6 M15.4 3 V7" stroke="#1c1c1c" stroke-width="1"/></svg><div class="a" style="left:2.6px;top:17.4px;font-size:8.8px;font-weight:bold;color:#262626;transform:scaleX(.8);transform-origin:0 0;line-height:11px">FX</div></div>
<div class="a" style="left:1240px;top:624px;width:41px;height:30.6px;background:#1b1b1b;border:1px solid #101010"><div class="a" style="left:1px;top:1px;width:37px;height:11px;background:#2d2d2d"></div><div class="a" style="left:4.6px;top:1.6px;font-size:8.2px;font-weight:bold;line-height:11px;color:#07a65f">M</div><div class="a" style="left:18.6px;top:1.6px;font-size:8.2px;font-weight:bold;line-height:11px;color:#4a4a4a;transform:scaleX(.8);transform-origin:0 0">R</div><div class="a" style="left:29.6px;top:1.6px;font-size:8.2px;font-weight:bold;line-height:11px;color:#1c7fa0;transform:scaleX(.85);transform-origin:0 0">S</div><div class="a" style="left:4.6px;top:17.4px;font-size:8.6px;font-weight:bold;line-height:11px;color:#b4b4b4;transform:scaleX(.76);transform-origin:0 0;letter-spacing:.2px">ROUTING</div></div>
<div class="a" style="left:1287px;top:624px;width:37px;height:30.6px;background:#2b2b2b"><div class="a" style="left:2.5px;top:2.8px;width:32px;height:13.4px;background:#a9b5b3;border:1px solid #c6cfcd;border-bottom-color:#8d9997;box-shadow:0 1px 1px #111"></div><svg class="a" style="left:0;top:0" width="37" height="30" viewBox="0 0 37 30"><polygon points="11,4.8 13.4,6.6 16.7,7 16.7,11.8 13.4,12.2 11,14" fill="#717c7a"/><polygon points="27.5,4.8 25.1,6.6 21.8,7 21.8,11.8 25.1,12.2 27.5,14" fill="#717c7a"/></svg><div class="a" style="left:7.6px;top:17.6px;font-size:8.6px;font-weight:bold;line-height:11px;color:#b4b4b4;transform:scaleX(.8);transform-origin:0 0;letter-spacing:.2px">MONO</div></div>
<div class="a" style="left:1205px;top:659.4px;width:125.6px;text-align:center;font-size:10.5px;line-height:14px;color:#d8d8d8">MASTER</div>
<div class="a" style="left:1205px;top:677px;width:124px;height:120px;background:linear-gradient(#a4aead,#98a4a3);border-top:1px solid #b4bebd"></div>
<svg class="a" style="left:1254px;top:703px" width="26" height="26" viewBox="0 0 26 26"><defs><linearGradient id="kn" x1="0" x2="0" y1="0" y2="1"><stop offset="0" stop-color="#fbfbfb"/><stop offset="1" stop-color="#c9c9c9"/></linearGradient></defs><circle cx="13" cy="13.2" r="9.8" fill="#6d7776" opacity=".55"/><circle cx="13" cy="12.5" r="9" fill="url(#kn)" stroke="#7c8584" stroke-width=".8"/><path d="M13 5 V10.2" stroke="#333" stroke-width="1.1"/></svg>
<div class="a" style="left:1205px;top:728px;width:125px;text-align:center;font-family:'DejaVu Sans',sans-serif;font-size:9.6px;line-height:14px;color:#474d4c">center</div>
<div class="a" style="left:1211px;top:747px;width:90px;height:50px;background:#1d1d1d;border:1px solid #0c0c0c;font-size:9.6px;color:#9a9a9a"><div class="a" style="left:0;top:3px;width:88px;text-align:center;font-family:'DejaVu Sans',sans-serif;font-size:9.4px;color:#8a8a8a;line-height:14px">0.00dB</div><div class="a" style="left:8px;top:21px;line-height:12px">-76.7</div><div class="a" style="left:41px;top:21px;line-height:12px">-inf</div><div class="a" style="left:4px;top:38px;line-height:12px">12</div><div class="a" style="left:53px;top:38px;line-height:12px">12</div><div class="a" style="left:74.5px;top:24px;width:1.4px;height:30px;background:#000"></div></div>
<div class="a" style="left:1305px;top:748px;width:20px;height:19px;background:linear-gradient(#fdfdfd,#e9e9e9);border:1px solid #7d7d7d;box-shadow:0 1px 1px rgba(0,0,0,.35);text-align:center;font-size:12.5px;line-height:18px;color:#5b2626">M</div>
<div class="a" style="left:1305px;top:774px;width:20px;height:19px;background:linear-gradient(#fdfdfd,#e9e9e9);border:1px solid #7d7d7d;box-shadow:0 1px 1px rgba(0,0,0,.35);text-align:center;font-size:12.5px;line-height:18px;color:#5e5e22">S</div>
<div class="a" id="vst" style="-webkit-text-stroke:.22px currentColor;left:8px;top:404px;width:456px;height:400px;background:#f0f0f0;box-shadow:0 1px 11px rgba(0,0,0,.3),0 0 1px rgba(0,0,0,.35)"><div class="a" style="left:0;top:0;width:456px;height:31px;background:#fff"></div><div class="a" style="-webkit-text-stroke:0;left:8px;top:9px;font-size:12px;letter-spacing:-0.27px;line-height:15px;color:#999;white-space:nowrap">VST: ReaInsert (Cockos) - Track 1</div><svg class="a" style="left:388px;top:6px" width="18" height="20" viewBox="0 0 18 20" fill="none" stroke="#8a8a8a" stroke-width=".8"><path d="M3.6 1.6 H13.4 Q13.3 3.6 11 4.1 V7 Q15.4 8 15.8 10.6 H1.2 Q1.6 8 6 7 V4.1 Q3.7 3.6 3.6 1.6 Z M7.6 10.6 V15 L8.5 16.9 L9.4 15 V10.6 M7.9 2.6 V8 M9.1 2.6 V8"/></svg><div class="a" style="left:436px;top:8px;width:19px;height:19px;background:#e6e6e6;color:#fff;font-size:11px;line-height:19px;text-align:center;-webkit-text-stroke:0">×</div><div class="a" style="left:2.0px;top:33.5px;width:233.0px;height:20.0px;background:#e1e1e1;border:1px solid #adadad;white-space:nowrap;font-size:11.6px;overflow:hidden"><div class="a" style="left:3px;top:.8px;line-height:18.0px"><span style="letter-spacing:0.035px;">No preset</span></div><svg class="a" style="right:3px;top:6.8px" width="10" height="6" viewBox="0 0 10 6" fill="none"><path d="M.7 .7 L5 5 L9.3 .7" stroke="#444" stroke-width="1.1"/></svg></div><div class="a" style="left:240.0px;top:34.0px;width:16.0px;height:18.0px;background:#e1e1e1;border:1px solid #adadad;white-space:nowrap;font-size:11.6px;overflow:hidden;text-align:center;line-height:16.0px"><span style="">+</span></div><div class="a" style="left:261.0px;top:34.0px;width:43.0px;height:18.0px;background:#e1e1e1;border:1px solid #adadad;white-space:nowrap;font-size:11.6px;overflow:hidden;text-align:center;line-height:16.0px"><span style="letter-spacing:-0.373px;">Param</span></div><div class="a" style="left:309.0px;top:34.0px;width:73.0px;height:18.0px;background:#e1e1e1;border:1px solid #adadad;white-space:nowrap;font-size:11.6px;overflow:hidden;text-align:center;line-height:16.0px"><span style="letter-spacing:0.018px;">2 in 2 out</span></div><div class="a" style="left:387.0px;top:34.0px;width:24.0px;height:18.0px;background:#e1e1e1;border:1px solid #adadad;white-space:nowrap;font-size:11.6px;overflow:hidden;text-align:center;line-height:16.0px"><span style="letter-spacing:-0.050px;">UI</span></div><svg class="a" style="left:414px;top:32px" width="22" height="22" viewBox="0 0 22 22"><defs><linearGradient id="k2" x1="0" x2="0" y1="0" y2="1"><stop offset="0" stop-color="#fff"/><stop offset="1" stop-color="#e2e2e2"/></linearGradient></defs><circle cx="11.2" cy="11" r="8" fill="#c4c4c4"/><circle cx="11" cy="10.3" r="7.5" fill="url(#k2)" stroke="#8a8a8a" stroke-width=".9"/><path d="M11.6 12.2 L13.8 16.4" stroke="#222" stroke-width="1.2"/></svg><div class="a" style="left:437px;top:36px;width:13px;height:13px;background:#fff;border:1px solid #333"></div><svg class="a" style="left:437px;top:36px" width="13" height="13" viewBox="0 0 13 13" fill="none"><path d="M2.6 6.6 L5.2 9.4 L10.6 3" stroke="#222" stroke-width="1.2"/></svg><div class="a" style="left:2.0px;top:69.0px;width:453.0px;height:315.5px;border:1px solid #dcdcdc"></div><div class="a" style="left:7.0px;top:61.6px;padding:0 2px;background:#f0f0f0;line-height:16px;font-size:11.6px;white-space:nowrap;letter-spacing:-0.299px;">ReaInsert</div><div class="a" style="left:98.0px;top:84.2px;width:261.0px;height:111.3px;border:1px solid #dcdcdc"></div><div class="a" style="left:105.4px;top:76.8px;padding:0 2px;background:#f0f0f0;line-height:16px;font-size:11.6px;white-space:nowrap;letter-spacing:-0.307px;">Hardware Sends</div><div class="a" style="left:98.6px;top:207.6px;width:260.9px;height:67.9px;border:1px solid #dcdcdc"></div><div class="a" style="left:106.0px;top:200.2px;padding:0 2px;background:#f0f0f0;line-height:16px;font-size:11.6px;white-space:nowrap;letter-spacing:-0.201px;">Hardware Returns</div><div class="a" style="left:21.0px;top:77.0px;line-height:16px;font-size:11.6px;color:#000;white-space:nowrap;letter-spacing:-0.063px;">Send vol:</div><div class="a" style="left:375.0px;top:77.0px;line-height:16px;font-size:11.6px;color:#000;white-space:nowrap;letter-spacing:-0.026px;">Return vol:</div><div class="a" style="left:108.0px;top:98.0px;line-height:16px;font-size:11.6px;color:#000;white-space:nowrap;letter-spacing:0.026px;">Left:</div><div class="a" style="left:148.5px;top:94.3px;width:201.0px;height:20.3px;background:#e1e1e1;border:1px solid #adadad;white-space:nowrap;font-size:11.6px;overflow:hidden"><div class="a" style="left:4px;top:.8px;line-height:18.3px"><span style="letter-spacing:-0.494px;">Out 1</span></div><svg class="a" style="right:3px;top:6.9500000000000055px" width="10" height="6" viewBox="0 0 10 6" fill="none"><path d="M.7 .7 L5 5 L9.3 .7" stroke="#444" stroke-width="1.1"/></svg></div><div class="a" style="left:108.0px;top:124.0px;line-height:16px;font-size:11.6px;color:#000;white-space:nowrap;letter-spacing:0.116px;">Right:</div><div class="a" style="left:148.5px;top:120.3px;width:201.0px;height:20.3px;background:#e1e1e1;border:1px solid #adadad;white-space:nowrap;font-size:11.6px;overflow:hidden"><div class="a" style="left:4px;top:.8px;line-height:18.3px"><span style="letter-spacing:-0.107px;">None</span></div><svg class="a" style="right:3px;top:6.950000000000034px" width="10" height="6" viewBox="0 0 10 6" fill="none"><path d="M.7 .7 L5 5 L9.3 .7" stroke="#444" stroke-width="1.1"/></svg></div><div class="a" style="left:108.0px;top:150.0px;line-height:16px;font-size:11.6px;color:#000;white-space:nowrap;letter-spacing:0.038px;">MIDI:</div><div class="a" style="left:148.5px;top:146.3px;width:201.0px;height:20.3px;background:#e1e1e1;border:1px solid #adadad;white-space:nowrap;font-size:11.6px;overflow:hidden"><div class="a" style="left:4px;top:.8px;line-height:18.3px"><span style="letter-spacing:-0.107px;">None</span></div><svg class="a" style="right:3px;top:6.950000000000034px" width="10" height="6" viewBox="0 0 10 6" fill="none"><path d="M.7 .7 L5 5 L9.3 .7" stroke="#444" stroke-width="1.1"/></svg></div><div class="a" style="left:149.5px;top:174.0px;line-height:16px;font-size:11.6px;color:#000;white-space:nowrap;letter-spacing:-0.283px;">MIDI channels:</div><div class="a" style="left:227.0px;top:170.3px;width:52.8px;height:20.3px;background:#e1e1e1;border:1px solid #adadad;white-space:nowrap;font-size:11.6px;overflow:hidden"><div class="a" style="left:3px;top:.8px;line-height:18.3px"><span style="letter-spacing:0.069px;">All</span></div><svg class="a" style="right:3px;top:6.950000000000034px" width="10" height="6" viewBox="0 0 10 6" fill="none"><path d="M.7 .7 L5 5 L9.3 .7" stroke="#444" stroke-width="1.1"/></svg></div><div class="a" style="left:283.0px;top:174.0px;line-height:16px;font-size:11.6px;color:#000;white-space:nowrap;width:10px;overflow:hidden;letter-spacing:1px">=&gt;</div><div class="a" style="left:297.0px;top:170.3px;width:52.8px;height:20.3px;background:#e1e1e1;border:1px solid #adadad;white-space:nowrap;font-size:11.6px;overflow:hidden"><div class="a" style="left:3px;top:.8px;line-height:18.3px"><span style="letter-spacing:0.069px;">All</span></div><svg class="a" style="right:3px;top:6.950000000000034px" width="10" height="6" viewBox="0 0 10 6" fill="none"><path d="M.7 .7 L5 5 L9.3 .7" stroke="#444" stroke-width="1.1"/></svg></div><div class="a" style="left:107.0px;top:224.5px;line-height:16px;font-size:11.6px;color:#000;white-space:nowrap;letter-spacing:0.026px;">Left:</div><div class="a" style="left:146.8px;top:222.0px;width:200.7px;height:20.2px;background:#e1e1e1;border:1px solid #adadad;white-space:nowrap;font-size:11.6px;overflow:hidden"><div class="a" style="left:4px;top:.8px;line-height:18.2px"><span style="letter-spacing:-0.237px;">In 1</span></div><svg class="a" style="right:3px;top:6.900000000000023px" width="10" height="6" viewBox="0 0 10 6" fill="none"><path d="M.7 .7 L5 5 L9.3 .7" stroke="#444" stroke-width="1.1"/></svg></div><div class="a" style="left:107.0px;top:251.0px;line-height:16px;font-size:11.6px;color:#000;white-space:nowrap;letter-spacing:0.116px;">Right:</div><div class="a" style="left:146.8px;top:248.3px;width:200.7px;height:20.2px;background:#e1e1e1;border:1px solid #adadad;white-space:nowrap;font-size:11.6px;overflow:hidden"><div class="a" style="left:4px;top:.8px;line-height:18.2px"><span style="letter-spacing:-0.107px;">None</span></div><svg class="a" style="right:3px;top:6.900000000000023px" width="10" height="6" viewBox="0 0 10 6" fill="none"><path d="M.7 .7 L5 5 L9.3 .7" stroke="#444" stroke-width="1.1"/></svg></div><div class="a" style="left:98px;top:288px;width:13px;height:13px;background:#fff;border:1px solid #333"></div><div class="a" style="left:114.0px;top:287.0px;line-height:16px;font-size:11.6px;color:#000;white-space:nowrap;letter-spacing:-0.025px;">Automatic device latency adjustmer</div><div class="a" style="left:125.5px;top:306.0px;line-height:16px;font-size:11.6px;color:#a8a8a8;white-space:nowrap;letter-spacing:-0.145px;text-shadow:1px 1px 0 #fff">Reported latency: 448 samples</div><div class="a" style="left:98.0px;top:338.0px;line-height:16px;font-size:11.6px;color:#000;white-space:nowrap;letter-spacing:0.105px;">Additional Delay</div><div class="a" style="left:15.0px;top:364.0px;line-height:16px;font-size:11.6px;color:#000;white-space:nowrap;letter-spacing:0.039px;">Note: you may need to stop/start playback after changing delay compensation</div><div class="a" style="left:257px;top:336.5px;width:50px;height:22px;background:#fff;border:1px solid #7a7a7a;font-size:11.6px;line-height:18px;padding-left:6px">594</div><div class="a" style="left:309.5px;top:338.0px;line-height:16px;font-size:11.6px;color:#000;white-space:nowrap;width:38px;overflow:hidden">samples</div><div class="a" style="left:356.0px;top:335.5px;width:77.0px;height:20.5px;background:#e1e1e1;border:1px solid #adadad;white-space:nowrap;font-size:11.6px;overflow:hidden;text-align:center;line-height:18.5px"><span style="letter-spacing:-0.103px;">Ping detect</span></div><div class="a" style="left:23.2px;top:95px;width:19.6px;height:203px;background:#e6e6e6"></div><div class="a" style="left:25.2px;top:147px;width:16.0px;height:19.5px;border:1px solid #8e8e8e;border-radius:3px;background:linear-gradient(#fdfdfd 0,#ededed 46%,#858585 46%,#858585 52%,#e6e6e6 52%,#c4c4c4 100%);box-shadow:0 2px 1.5px rgba(0,0,0,.32)"></div><div class="a" style="left:41.2px;top:156.2px;width:1.5px;height:1px;background:#333"></div><div class="a" style="left:375.3px;top:95px;width:19.4px;height:203px;background:#e6e6e6"></div><div class="a" style="left:377.0px;top:147px;width:15.7px;height:19.5px;border:1px solid #8e8e8e;border-radius:3px;background:linear-gradient(#fdfdfd 0,#ededed 46%,#858585 46%,#858585 52%,#e6e6e6 52%,#c4c4c4 100%);box-shadow:0 2px 1.5px rgba(0,0,0,.32)"></div><div class="a" style="left:392.7px;top:156.2px;width:1.5px;height:1px;background:#333"></div><div class="a" style="left:56.0px;top:95px;width:24.0px;height:231px;background:linear-gradient(#5d0000 0,#5d0000 21px,#04663a 21px,#045a44 50%,#03494a 100%);color:#e8e8e8;font-size:9.4px;text-align:center;overflow:hidden"><div class="a" style="left:11.0px;top:21px;width:1.6px;height:210px;background:#2a2a2a"></div><div class="a" style="left:0;top:4px;width:24.0px;line-height:12px;color:#f4eeee">-inf</div><div class="a" style="left:0;top:35.3px;width:24.0px;line-height:12px;opacity:1.00">-6-</div><div class="a" style="left:0;top:55.8px;width:24.0px;line-height:12px;opacity:1.00">-12-</div><div class="a" style="left:0;top:76.2px;width:24.0px;line-height:12px;opacity:1.00">-18-</div><div class="a" style="left:0;top:96.6px;width:24.0px;line-height:12px;opacity:0.90">-24-</div><div class="a" style="left:0;top:117.1px;width:24.0px;line-height:12px;opacity:0.80">-30-</div><div class="a" style="left:0;top:137.5px;width:24.0px;line-height:12px;opacity:0.70">-36-</div><div class="a" style="left:0;top:158.0px;width:24.0px;line-height:12px;opacity:0.60">-42-</div><div class="a" style="left:0;top:178.4px;width:24.0px;line-height:12px;opacity:0.50">-48-</div><div class="a" style="left:0;top:198.9px;width:24.0px;line-height:12px;opacity:0.40">-54-</div><div class="a" style="left:0;top:219.3px;width:24.0px;line-height:12px;opacity:0.38">-60-</div></div><div class="a" style="left:408.0px;top:95px;width:24.0px;height:231px;background:linear-gradient(#5d0000 0,#5d0000 21px,#04663a 21px,#045a44 50%,#03494a 100%);color:#e8e8e8;font-size:9.4px;text-align:center;overflow:hidden"><div class="a" style="left:11.0px;top:21px;width:1.6px;height:210px;background:#2a2a2a"></div><div class="a" style="left:0;top:4px;width:24.0px;line-height:12px;color:#f4eeee">-44.5</div><div class="a" style="left:0;top:35.3px;width:24.0px;line-height:12px;opacity:1.00">-6-</div><div class="a" style="left:0;top:55.8px;width:24.0px;line-height:12px;opacity:1.00">-12-</div><div class="a" style="left:0;top:76.2px;width:24.0px;line-height:12px;opacity:1.00">-18-</div><div class="a" style="left:0;top:96.6px;width:24.0px;line-height:12px;opacity:0.90">-24-</div><div class="a" style="left:0;top:117.1px;width:24.0px;line-height:12px;opacity:0.80">-30-</div><div class="a" style="left:0;top:137.5px;width:24.0px;line-height:12px;opacity:0.70">-36-</div><div class="a" style="left:0;top:158.0px;width:24.0px;line-height:12px;opacity:0.60">-42-</div><div class="a" style="left:0;top:178.4px;width:24.0px;line-height:12px;opacity:0.50">-48-</div><div class="a" style="left:0;top:198.9px;width:24.0px;line-height:12px;opacity:0.40">-54-</div><div class="a" style="left:0;top:219.3px;width:24.0px;line-height:12px;opacity:0.38">-60-</div></div><div class="a" style="left:18.0px;top:303px;width:33.0px;height:23px;background:#fff;border:1px solid #7a7a7a;font-size:11.2px;line-height:20px;text-align:center;padding-left:2px">+0.0</div><div class="a" style="left:371.2px;top:303px;width:32.6px;height:23px;background:#fff;border:1px solid #7a7a7a;font-size:11.2px;line-height:20px;text-align:center;padding-left:2px">+0.0</div></div>
<div class="a" style="left:251px;top:722px;width:113.3px;height:51px;border:5px solid #ed1c24"></div>
<div class="a" style="left:951px;top:128px;width:116px;height:83px;border:5px solid #ed1c24"></div>
<div class="a" style="left:1046px;top:22px;font-size:12.3px;line-height:16px;white-space:nowrap;color:#000;-webkit-text-stroke:.2px #000">[96kHz 24bit WAV : 2/2ch 64spls ~2.1/2.5ms ASIO]</div>
<div class="a" style="left:964px;top:142.5px;width:82px;height:48px;background:#ffffe1;border:1px solid #333;-webkit-text-stroke:.2px #000;font-size:12px;line-height:15.2px;padding:0 0 0 2px;white-space:nowrap">Start: 209455<br><span style="letter-spacing:-.36px">End: 210051</span><br>Length: 597</div>
<svg class="a" style="left:1250px;top:0" width="70" height="14" viewBox="0 0 70 14" fill="none" stroke="#222" stroke-width="1"><path d="M4.5 4.5 H11.5 V11.5 H4.5 Z M6.8 4.5 V2.5 H13.5 V9.5 H11.5"/><path d="M50 2 L60 12 M60 2 L50 12"/></svg>
<div class="a" style="left:1036px;top:3.8px;width:297px;height:45px;border:5.2px solid #ed1c24"></div>
<div class="a" style="left:-1.6px;top:23.4px;font-size:11.5px;line-height:14px">]</div>
</body></html>
